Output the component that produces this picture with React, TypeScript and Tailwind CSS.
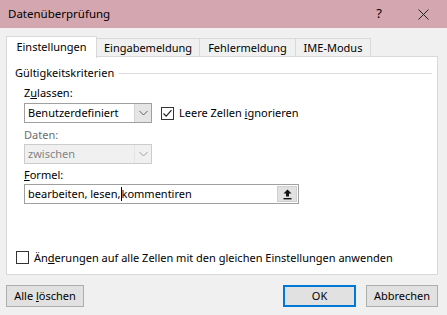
import React from 'react';

const font = { fontFamily: '"Noto Sans", "Liberation Sans", sans-serif' };

const Check = ({ checked }: { checked?: boolean }) => (
  <span className="w-[13px] h-[13px] border border-[#333333] bg-white flex items-center justify-center shrink-0">
    {checked && (
      <svg width="11" height="11" viewBox="0 0 11 11">
        <path d="M1.5 5.5 L4.2 8.2 L9.5 2.2" fill="none" stroke="#222" strokeWidth="1.2" />
      </svg>
    )}
  </span>
);

const Chevron = ({ color }: { color: string }) => (
  <svg width="9" height="6" viewBox="0 0 9 6">
    <path d="M0.5 1 L4.5 5 L8.5 1" fill="none" stroke={color} strokeWidth="1" />
  </svg>
);

const Combo = ({ value, disabled }: { value: string; disabled?: boolean }) => (
  <div
    className={
      disabled
        ? 'w-[128px] h-[20px] border border-[#cccccc] bg-[#f0f0f0] flex'
        : 'w-[128px] h-[20px] border border-[#a0a0a0] bg-white flex'
    }
  >
    <div className={disabled ? 'flex-1 pl-[3px] leading-[18px] text-[#838383]' : 'flex-1 pl-[3px] leading-[18px]'}>
      {value}
    </div>
    <div className={disabled ? 'w-[17px] flex items-center justify-center bg-[#f0f0f0] border-l border-[#e4e4e4]' : 'w-[17px] flex items-center justify-center bg-[#e5e5e5] border-l border-[#d4d4d4]'}>
      <Chevron color={disabled ? '#a0a0a0' : '#606060'} />
    </div>
  </div>
);

const Tab = ({ label, active, w }: { label: string; active?: boolean; w: string }) => (
  <div
    className={
      (active
        ? 'h-[22px] bg-white border border-b-0 border-[#d9d9d9] leading-[20px] relative z-10 -mb-px '
        : 'h-[19px] bg-[#f0f0f0] border border-b-0 border-l-0 border-[#d9d9d9] leading-[18px] ') +
      'text-center ' +
      w
    }
  >
    {label}
  </div>
);

const Button = ({ children, primary, w }: { children: React.ReactNode; primary?: boolean; w: string }) => (
  <div
    className={
      (primary
        ? 'border-2 border-[#0078d7] leading-[18px] '
        : 'border border-[#adadad] leading-[20px] ') +
      'h-[22px] bg-[#e1e1e1] text-center ' +
      w
    }
  >
    {children}
  </div>
);

export default function App() {
  return (
    <div className="w-[447px] h-[315px] bg-[#f0f0f0] text-[11px] text-black flex flex-col overflow-hidden" style={font}>
      {/* title bar */}
      <div className="h-[28px] bg-[#d4a7b0] flex items-center pl-[8px] shrink-0">
        <span className="flex-1 text-[11.5px]">Datenüberprüfung</span>
        <span className="text-[13px] mr-[36px]">?</span>
        <svg width="11" height="11" viewBox="0 0 11 11" className="mr-[18px]">
          <path d="M0.5 0.5 L10.5 10.5 M10.5 0.5 L0.5 10.5" stroke="#222" strokeWidth="1" />
        </svg>
      </div>

      {/* tabs */}
      <div className="flex items-end pl-[6px] h-[29px] shrink-0">
        <Tab label="Einstellungen" active w="w-[91px]" />
        <Tab label="Eingabemeldung" w="w-[103px]" />
        <Tab label="Fehlermeldung" w="w-[96px]" />
        <Tab label="IME-Modus" w="w-[75px]" />
      </div>

      {/* panel */}
      <div className="ml-[6px] w-[432px] h-[219px] -mt-px bg-white border border-[#d9d9d9] flex flex-col pl-[8px] pr-[5px] pt-[9px] shrink-0">
        <div className="flex items-center h-[14px]">
          <span>Gültigkeitskriterien</span>
          <div className="flex-1 h-px bg-[#dcdcdc] ml-[5px]" />
        </div>

        <div className="pl-[9px] flex flex-col">
          <div className="mt-[6px] h-[14px] leading-[14px]">
            Z<span className="underline">u</span>lassen:
          </div>
          <div className="mt-[3px] flex items-center">
            <Combo value="Benutzerdefiniert" />
            <div className="ml-[9px] flex items-center gap-[5px]">
              <Check checked />
              <span>
                Leere Zellen <span className="underline">i</span>gnorieren
              </span>
            </div>
          </div>
          <div className="mt-[5px] h-[14px] leading-[14px] text-[#6d6d6d]">Daten:</div>
          <div className="mt-[2px]">
            <Combo value="zwischen" disabled />
          </div>
          <div className="mt-[4px] h-[14px] leading-[14px]">
            <span className="underline">F</span>ormel:
          </div>
          <div className="mt-[2px] w-[275px] h-[20px] border border-[#a0a0a0] bg-white flex items-stretch">
            <div className="flex-1 pl-[3px] leading-[18px] flex items-center">
              <span>bearbeiten, lesen,</span>
              <span className="w-px h-[14px] bg-black" />
              <span>kommentiren</span>
            </div>
            <div className="w-[20px] my-px mr-px bg-[#e1e1e1] border border-[#d0d0d0] flex items-center justify-center">
              <svg width="9" height="11" viewBox="0 0 9 11">
                <path d="M4.5 0.5 L8.5 4.5 L6 4.5 L6 7.5 L3 7.5 L3 4.5 L0.5 4.5 Z" fill="#111" />
                <rect x="0.5" y="9" width="8" height="1.4" fill="#111" />
              </svg>
            </div>
          </div>
        </div>

        <div className="mt-auto mb-[8px] flex items-center gap-[5px] pl-[1px]">
          <Check />
          <span>
            Än<span className="underline">d</span>erungen auf alle Zellen mit den gleichen Einstellungen anwenden
          </span>
        </div>
      </div>

      {/* buttons */}
      <div className="flex items-center px-[6px] mt-[10px]">
        <Button w="w-[78px]">
          Alle <span className="underline">l</span>öschen
        </Button>
        <div className="flex-1" />
        <Button primary w="w-[73px]">OK</Button>
        <div className="w-[10px]" />
        <Button w="w-[72px]">Abbrechen</Button>
        <div className="w-[3px]" />
      </div>
    </div>
  );
}
